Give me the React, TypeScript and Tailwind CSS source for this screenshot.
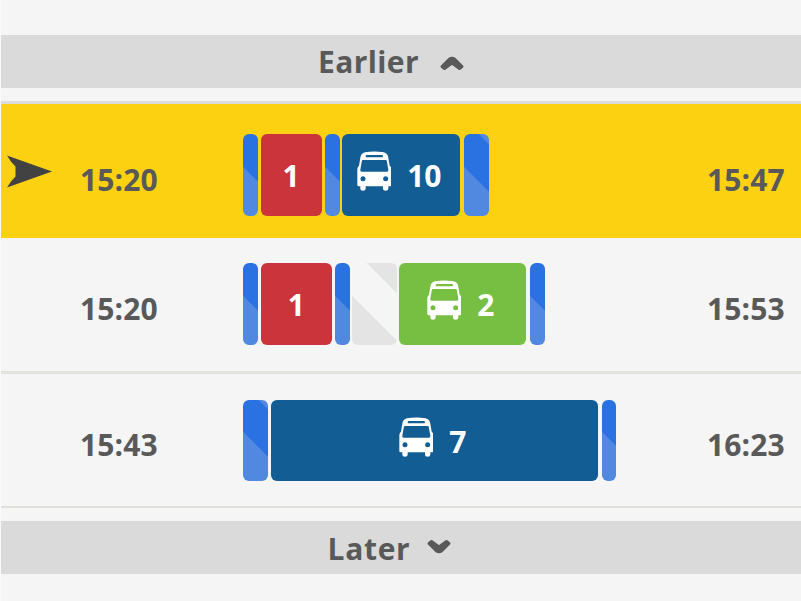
import React from 'react';

const walk =
  'bg-[linear-gradient(45deg,#5289e0_34.5px,#2a72e2_35.2px,#2a72e2_68px,#5289e0_68.7px)]';
const wait =
  'bg-[linear-gradient(45deg,#e4e4e4_34.5px,#f5f5f5_35.2px,#f5f5f5_68px,#e4e4e4_68.7px)]';

function Bus() {
  return (
    <svg viewBox="0 0 104 120" className="mt-[17px] h-[40px] w-[34.67px] shrink-0" fill="#fff">
      <path
        fillRule="evenodd"
        d="M24 4 Q52 -1 80 4 Q92 7 94 20 L98 44 Q103 47 103 55 V102 Q103 106 99 106 H94 V113 Q94 119 86 119 Q78 119 78 113 V106 H26 V113 Q26 119 18 119 Q10 119 10 113 V106 H5 Q1 106 1 102 V55 Q1 47 6 44 L10 20 Q12 7 24 4Z M29 12 Q26 12 26 15.500 Q26 19 29 19 H75 Q78 19 78 15.500 Q78 12 75 12Z M18 27 Q15 27 14.500 30 L10 56 Q9 62 14 62 H90 Q95 62 94 56 L89.500 30 Q89 27 86 27Z M18 76 A7.500 7.500 0 1 0 18 91 A7.500 7.500 0 1 0 18 76Z M86 76 A7.500 7.500 0 1 0 86 91 A7.500 7.500 0 1 0 86 76Z"
      />
    </svg>
  );
}

function Walk({ className }: { className: string }) {
  return <div className={`shrink-0 rounded-[6px] ${className}`} />;
}

function Ride({ className, label, bus }: { className: string; label: string; bus?: boolean }) {
  return (
    <div className={`flex shrink-0 justify-center rounded-[6px] text-[30px] font-bold leading-[38px] text-white ${bus ? 'pr-[4px]' : ''} ${className}`}>
      {bus && <Bus />}
      <span className={bus ? 'mt-[23px] ml-[16px]' : 'mt-[23px]'}>{label}</span>
    </div>
  );
}

function Row({ className, dep, arr, arrow, children }: {
  className: string; dep: string; arr: string; arrow?: boolean; children: React.ReactNode;
}) {
  return (
    <div className={`flex ${className}`}>
      <div className="w-[79px] shrink-0">
        {arrow && (
          <svg viewBox="0 0 46 34" className="mt-[20px] ml-[5px] h-[34px] w-[46px]" fill="#424242">
            <path d="M1 1 L46 17 L1 33 Q5 26 9.500 22 V12 Q5 8 1 1Z" transform="translate(0 0.5)" />
          </svg>
        )}
      </div>
      <span className="mt-[24.500px] w-[163px] shrink-0 leading-[41px] tracking-[0.1px]">{dep}</span>
      <div className="flex h-[81.500px] w-[464px] shrink-0">{children}</div>
      <span className="mt-[24.500px] leading-[41px] tracking-[0.1px]">{arr}</span>
    </div>
  );
}

function Chevron({ className }: { className: string }) {
  return (
    <svg viewBox="0 0 26 16" className={`h-[16px] w-[26px] ${className}`} fill="#595959" stroke="#595959" strokeWidth="3" strokeLinejoin="round">
      <path d="M3 11.500 L10.500 4 Q13 2.500 15.500 4 L23 11.500 L20.500 13.500 L13 8 L5.500 13.500Z" />
    </svg>
  );
}

export default function App() {
  return (
    <div className="flex h-[601px] w-[801px] flex-col overflow-hidden border-l border-[#fafafa] bg-[#f5f5f5] pt-[35px] font-['Open_Sans','Noto_Sans',sans-serif] text-[30px] font-bold text-[#595959]">
      <div className="flex h-[53px] shrink-0 bg-[#dadada] pl-[317px] leading-[53px]">
        <span className="w-[121px] tracking-[0.4px]">Earlier</span>
        <Chevron className="mt-[20px]" />
      </div>
      <div className="mt-[13px] h-[3px] shrink-0 bg-[#dcdcdc]" />
      <Row className="-mt-[0.500px] h-[134.500px] shrink-0 bg-[#fcd112] pt-[30.500px]" dep="15:20" arr="15:47" arrow>
        <Walk className={`w-[14.500px] ${walk}`} />
        <Ride className="ml-[3px] w-[61px] bg-[#ca343a]" label="1" />
        <Walk className={`ml-[3.500px] w-[14.500px] ${walk}`} />
        <Ride className="ml-[2.500px] w-[118px] bg-[#125d94]" label="10" bus />
        <Walk className={`ml-[4px] w-[25px] ${walk}`} />
      </Row>
      <Row className="h-[136px] shrink-0 border-b-3 border-[#e1e2dc] pt-[25px]" dep="15:20" arr="15:53">
        <Walk className={`w-[14.500px] ${walk}`} />
        <Ride className="ml-[3px] w-[71.500px] bg-[#ca343a]" label="1" />
        <Walk className={`ml-[3px] w-[15px] ${walk}`} />
        <Walk className={`ml-[1.500px] w-[45.500px] ${wait}`} />
        <Ride className="ml-[2px] w-[127px] bg-[#77bf43]" label="2" bus />
        <Walk className={`ml-[4px] w-[14.500px] ${walk}`} />
      </Row>
      <Row className="h-[134px] shrink-0 border-b-2 border-[#dfdfdc] pt-[25.500px]" dep="15:43" arr="16:23">
        <Walk className={`w-[25px] ${walk}`} />
        <Ride className="ml-[3px] w-[327px] bg-[#125d94]" label="7" bus />
        <Walk className={`ml-[4px] w-[14px] ${walk}`} />
      </Row>
      <div className="mt-[13px] flex h-[53px] shrink-0 bg-[#dadada] pl-[326.500px] leading-[55px]">
        <span className="w-[98.500px] tracking-[0.7px]">Later</span>
        <Chevron className="mt-[18px] rotate-180" />
      </div>
    </div>
  );
}
